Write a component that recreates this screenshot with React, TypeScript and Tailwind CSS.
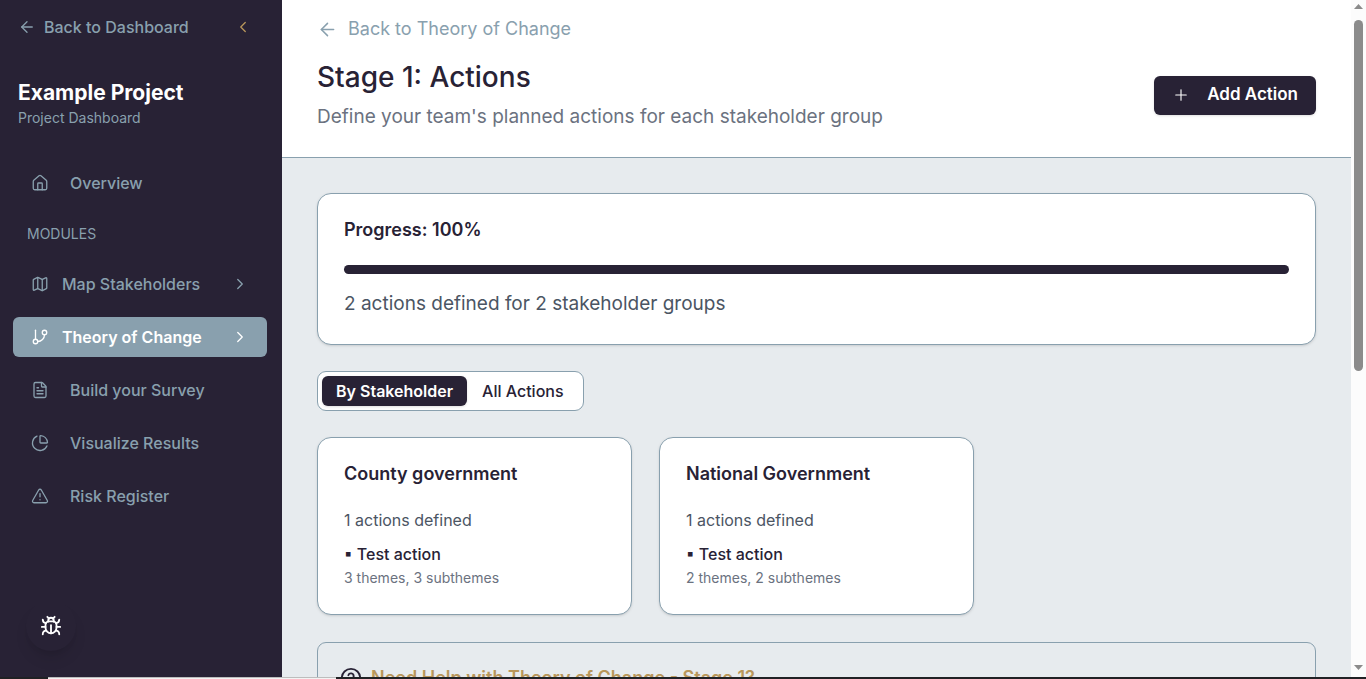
import {
  ArrowLeft,
  Bug,
  ChevronLeft,
  ChevronRight,
  ChartPie,
  CircleHelp,
  FileText,
  GitBranch,
  House,
  Map,
  Plus,
  TriangleAlert,
  type LucideIcon,
} from "lucide-react";

type NavItem = { label: string; icon: LucideIcon; expandable?: boolean; active?: boolean };

const modules: NavItem[] = [
  { label: "Map Stakeholders", icon: Map, expandable: true },
  { label: "Theory of Change", icon: GitBranch, expandable: true, active: true },
  { label: "Build your Survey", icon: FileText },
  { label: "Visualize Results", icon: ChartPie },
  { label: "Risk Register", icon: TriangleAlert },
];

const groups = [
  { name: "County government", actions: 1, themes: 3 },
  { name: "National Government", actions: 1, themes: 2 },
];

function NavLink({ label, icon: Icon, expandable, active }: NavItem) {
  return (
    <a
      href="#"
      aria-current={active ? "page" : undefined}
      className={`flex h-10 items-center rounded-md px-[18px] text-base ${
        active ? "bg-[#89a0ae] font-semibold text-white" : "font-medium text-[#89a0ae]"
      } ${expandable ? "gap-[13px]" : "gap-[21px]"}`}
    >
      <Icon size={18} strokeWidth={1.75} className="shrink-0" />
      <span className="flex-1 whitespace-nowrap">{label}</span>
      {expandable && <ChevronRight size={18} strokeWidth={1.75} className="shrink-0" />}
    </a>
  );
}

function Sidebar() {
  return (
    <aside className="flex w-[282px] shrink-0 flex-col bg-[#282235] text-[#89a0ae]">
      <div className="flex h-[54px] items-center justify-between pr-[30px] pl-[18px]">
        <a href="#" className="flex items-center gap-2 text-base font-medium">
          <ArrowLeft size={18} strokeWidth={1.75} />
          Back to Dashboard
        </a>
        <button type="button" aria-label="Collapse sidebar" className="text-[#b9975b]">
          <ChevronLeft size={18} strokeWidth={1.75} />
        </button>
      </div>
      <div className="px-[18px] pt-[25px]">
        <h2 className="text-[21px] leading-7 font-bold text-white">Example Project</h2>
        <p className="text-sm leading-[22px]">Project Dashboard</p>
      </div>
      <nav className="pt-[34px] pr-[15px] pl-[13px]">
        <NavLink label="Overview" icon={House} />
        <h3 className="px-3.5 pt-[21px] pb-5 text-sm leading-5">MODULES</h3>
        <div className="flex flex-col gap-[13px]">
          {modules.map((item) => (
            <NavLink key={item.label} {...item} />
          ))}
        </div>
      </nav>
      <button
        type="button"
        aria-label="Report a bug"
        className="mt-auto mb-[26px] ml-[26px] flex size-[50px] items-center justify-center rounded-full text-white shadow-lg"
      >
        <Bug size={22} />
      </button>
    </aside>
  );
}

function PageHeader() {
  return (
    <header className="border-b border-[#89a0ae] bg-white px-[35px] pt-[15px] pb-6">
      <a href="#" className="flex items-center gap-2.5 text-lg leading-7 text-[#89a0ae]">
        <ArrowLeft size={21} strokeWidth={1.75} />
        Back to Theory of Change
      </a>
      <div className="flex items-center justify-between pt-3.5">
        <div>
          <h1 className="text-[28px] leading-10 font-medium text-[#282235]">Stage 1: Actions</h1>
          <p className="pt-1 text-[19px] leading-8 text-[#6b7280]">
            Define your team's planned actions for each stakeholder group
          </p>
        </div>
        <button
          type="button"
          className="flex h-[39px] items-center gap-[17px] rounded-md bg-[#282235] px-[18px] text-[17px] font-semibold text-white shadow-sm"
        >
          <Plus size={18} strokeWidth={1.5} />
          Add Action
        </button>
      </div>
    </header>
  );
}

function ProgressCard() {
  return (
    <section className="rounded-[14px] border border-[#89a0ae] bg-white px-[26px] pt-[22px] pb-[26px] shadow-sm">
      <h2 id="progress" className="text-lg leading-7 font-semibold text-[#282235]">
        Progress: 100%
      </h2>
      <div
        role="progressbar"
        aria-labelledby="progress"
        aria-valuenow={100}
        className="mt-[21px] h-[9px] rounded-full bg-[#282235]"
      />
      <p className="pt-4 text-[19px] leading-7 text-[#4b5563]">2 actions defined for 2 stakeholder groups</p>
    </section>
  );
}

function ScrollRail() {
  return (
    <div aria-hidden="true" className="flex w-[15px] shrink-0 flex-col items-center bg-[#fcfcfc] text-[#8b8b8b]">
      <svg viewBox="0 0 9 5" className="mt-1 h-[5px] w-[9px]">
        <path d="M4.5 0 9 5H0z" fill="currentColor" />
      </svg>
      <div className="mt-[11px] h-[351px] w-[9px] rounded-full bg-[#8b8b8b]" />
      <svg viewBox="0 0 9 5" className="mt-auto mb-[7px] h-[5px] w-[9px]">
        <path d="M0 0h9L4.5 5z" fill="currentColor" />
      </svg>
    </div>
  );
}

export default function App() {
  return (
    <div className="flex h-screen flex-col overflow-hidden font-['Inter',sans-serif]">
      <div className="flex min-h-0 flex-1">
        <Sidebar />
        <main className="min-w-0 flex-1 overflow-hidden bg-[#e7ebee]">
          <PageHeader />
          <div className="flex flex-col gap-[26px] px-[35px] pt-[35px]">
            <ProgressCard />
            <div
              role="tablist"
              className="flex h-10 items-center self-start rounded-[9px] border border-[#89a0ae] bg-white p-1 text-base font-medium text-[#282235]"
            >
              <button
                type="button"
                role="tab"
                aria-selected="true"
                className="h-[30px] rounded-md bg-[#282235] px-3.5 font-semibold text-white shadow-sm"
              >
                By Stakeholder
              </button>
              <button type="button" role="tab" aria-selected="false" className="h-[30px] px-[15px]">
                All Actions
              </button>
            </div>
            <div className="grid grid-cols-3 gap-[27px]">
              {groups.map((group) => (
                <article
                  key={group.name}
                  className="rounded-[14px] border border-[#89a0ae] bg-white px-[26px] pt-[22px] pb-6 shadow-sm"
                >
                  <h3 className="text-lg leading-7 font-semibold text-[#282235]">{group.name}</h3>
                  <p className="pt-[18px] text-base leading-7 text-[#4b5563]">{group.actions} actions defined</p>
                  <p className="pt-2 text-base leading-6 font-medium text-[#282235]">▪ Test action</p>
                  <p className="text-sm leading-6 text-[#6b7280]">
                    {group.themes} themes, {group.themes} subthemes
                  </p>
                </article>
              ))}
            </div>
            <section className="mt-px rounded-t-[9px] border border-[#89a0ae] px-[22px] pt-[21px] pb-10">
              <h2 className="flex items-center gap-[9px] text-lg leading-7 font-semibold text-[#b9975b]">
                <CircleHelp size={22} className="text-[#282235]" />
                Need Help with Theory of Change - Stage 1?
              </h2>
            </section>
          </div>
        </main>
        <ScrollRail />
      </div>
      <div aria-hidden="true" className="flex h-0.5 shrink-0 bg-[#202124]">
        <div className="ml-12 w-72 border-t border-[#bdbdbd] bg-[#f3f3f3]" />
      </div>
    </div>
  );
}
